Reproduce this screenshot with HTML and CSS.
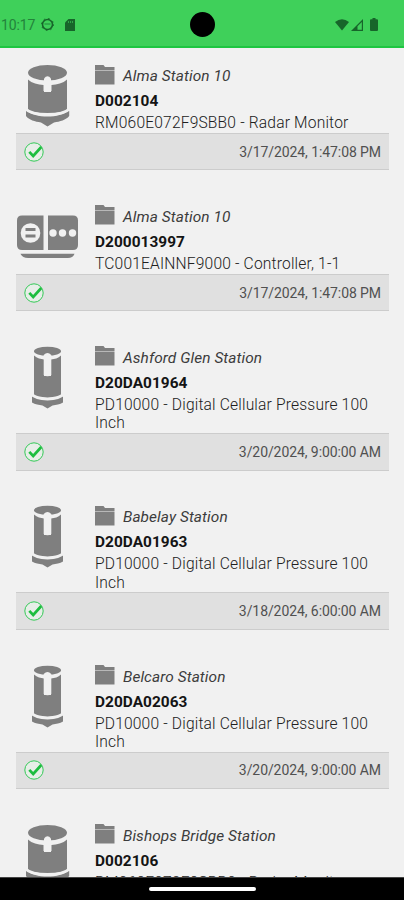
FILE: index.html
```
<!DOCTYPE html>
<html lang="en">
<head>
<meta charset="utf-8">
<title>Stations</title>
<link rel="stylesheet" href="styles.css">
</head>
<body>
<svg class="defs" width="0" height="0" aria-hidden="true">
  <symbol id="radar" viewBox="0 0 64 64">
    <ellipse cx="31.500" cy="8.800" rx="19.500" ry="7.800"/>
    <path d="M12 15.500C16 19.500 22 20.500 27.500 21V27H35.500V21C41 20.500 47 19.500 51 15.500V46C42 50.500 21 50.500 12 46Z"/>
    <path class="cut" d="M28 28V14.500Q31.500 10 35 14.500V28Z"/>
    <path d="M10.500 46.500C19 54.500 44 54.500 52.500 46.500L53.200 47V52C50 56 44 57.500 38 58.500L31.500 62.500L25 58.500C19 57.500 13 56 10 52V47Z"/>
    <path class="gap" d="M9 44.500C17 52.500 46 52.500 54 44.500"/>
  </symbol>
  <symbol id="pressure" viewBox="0 0 64 64">
    <ellipse cx="31.500" cy="5.300" rx="13.500" ry="4.500"/>
    <path d="M18 9.500C21 12.500 25 13 28 13.500V30H35V13.500C39 13 42 12.500 45 9.500V49C39 53 24 53 18 49Z"/>
    <path class="cut" d="M27.700 29V9Q31.500 5 35.300 9V29Q31.500 31.500 27.700 29Z"/>
    <path d="M17 49.500C22 55.500 41 55.500 46 49.500L47 51V56.500C44 58.500 40 59 36.500 59.500L31.500 62.500L26.500 59.500C23 59 19 58.500 16 56.500V51Z"/>
    <path class="gap" d="M15.500 48C21 54.500 42 54.500 47.500 48"/>
  </symbol>
  <symbol id="controller" viewBox="0 0 64 64">
    <path d="M6 10.500H27.500V45H6Q1 45 1 40V15.500Q1 10.500 6 10.500Z"/>
    <path d="M32 10.500H57Q62 10.500 62 15.500V40Q62 45 57 45H32Z"/>
    <path d="M4.500 48.800H58.500Q57 53 52 53H12Q6.500 53 4.500 48.800Z"/>
    <circle class="cut" cx="14.500" cy="28" r="9.800"/>
    <path d="M9.500 23H19.500V26H9.500ZM9.500 29.500H19.500V32.500H9.500Z"/>
    <g class="cut"><circle cx="37" cy="28" r="3.700"/><circle cx="46.500" cy="28" r="3.700"/><circle cx="56.500" cy="28" r="3.700"/></g>
  </symbol>
  <symbol id="folder" viewBox="0 0 20 20">
    <path d="M0 0H8.500L10 2H19.500V5H0Z"/><path d="M0 5H19.500V6H0Z" opacity=".5"/><path d="M0 6H19.500V19.500H0Z"/>
  </symbol>
  <symbol id="check" viewBox="0 0 20 20">
    <circle cx="10" cy="10" r="9.200" fill="#e7eee8" stroke="#35c957" stroke-width="1"/>
    <path d="M5.300 9.800L9.200 14L17.300 5" fill="none" stroke="#1dbd3f" stroke-width="2.700"/>
  </symbol>
</svg>
<div class="screen">
  <header class="status">
    <span class="clock">10:17</span>
    <svg class="face" viewBox="0 0 13 13"><circle cx="6.500" cy="6.500" r="5" fill="none" stroke="currentColor" stroke-width="1.600"/><circle cx="6.500" cy="6.500" r="6" fill="none" stroke="currentColor" stroke-width="1" stroke-dasharray="1.570 3.140"/><path d="M3.500 5.200H9.500V6.800H3.500Z" opacity=".45"/></svg>
    <svg class="card" viewBox="0 0 10 12"><path d="M3.500 0H10V12H0V3.500Z"/><path d="M3.500 2V4M5.500 2V4M7.500 2V4" stroke="#3fd05a" stroke-width=".6"/></svg>
    <span class="camera"></span>
    <svg class="wifi" viewBox="0 0 14 12"><path d="M0 3Q7-2.500 14 3L7 11.500Z"/></svg>
    <svg class="signal" viewBox="0 0 12 12"><path d="M0 12L12 0V12Z"/><path d="M6.500 7.300L10.800 3V10.800H6.500Z" fill="#3fd05a"/></svg>
    <svg class="battery" viewBox="0 0 8 13"><path d="M2.500 0H5.500V1.300H7Q8 1.300 8 2.500V12Q8 13 7 13H1Q0 13 0 12V2.500Q0 1.300 1 1.300H2.500Z"/></svg>
  </header>
  <main class="list">
    <article class="item">
      <div class="info"><svg class="device"><use href="#radar"/></svg>
        <div class="text"><div class="station"><svg class="folder"><use href="#folder"/></svg><span class="name">Alma Station 10</span></div>
        <div class="serial">D002104</div><div class="model">RM060E072F9SBB0 - Radar Monitor</div></div></div>
      <div class="bar"><svg class="check"><use href="#check"/></svg><time>3/17/2024, 1:47:08 PM</time></div>
    </article>
    <article class="item">
      <div class="info"><svg class="device"><use href="#controller"/></svg>
        <div class="text"><div class="station"><svg class="folder"><use href="#folder"/></svg><span class="name">Alma Station 10</span></div>
        <div class="serial">D200013997</div><div class="model">TC001EAINNF9000 - Controller, 1-1</div></div></div>
      <div class="bar"><svg class="check"><use href="#check"/></svg><time>3/17/2024, 1:47:08 PM</time></div>
    </article>
    <article class="item">
      <div class="info"><svg class="device"><use href="#pressure"/></svg>
        <div class="text"><div class="station"><svg class="folder"><use href="#folder"/></svg><span class="name">Ashford Glen Station</span></div>
        <div class="serial">D20DA01964</div><div class="model">PD10000 - Digital Cellular Pressure 100<br>Inch</div></div></div>
      <div class="bar"><svg class="check"><use href="#check"/></svg><time>3/20/2024, 9:00:00 AM</time></div>
    </article>
    <article class="item">
      <div class="info"><svg class="device"><use href="#pressure"/></svg>
        <div class="text"><div class="station"><svg class="folder"><use href="#folder"/></svg><span class="name">Babelay Station</span></div>
        <div class="serial">D20DA01963</div><div class="model">PD10000 - Digital Cellular Pressure 100<br>Inch</div></div></div>
      <div class="bar"><svg class="check"><use href="#check"/></svg><time>3/18/2024, 6:00:00 AM</time></div>
    </article>
    <article class="item">
      <div class="info"><svg class="device"><use href="#pressure"/></svg>
        <div class="text"><div class="station"><svg class="folder"><use href="#folder"/></svg><span class="name">Belcaro Station</span></div>
        <div class="serial">D20DA02063</div><div class="model">PD10000 - Digital Cellular Pressure 100<br>Inch</div></div></div>
      <div class="bar"><svg class="check"><use href="#check"/></svg><time>3/20/2024, 9:00:00 AM</time></div>
    </article>
    <article class="item">
      <div class="info"><svg class="device"><use href="#radar"/></svg>
        <div class="text"><div class="station"><svg class="folder"><use href="#folder"/></svg><span class="name">Bishops Bridge Station</span></div>
        <div class="serial">D002106</div><div class="model">RM060E072F9SBB0 - Radar Monitor</div></div></div>
    </article>
  </main>
  <footer class="nav"><span class="handle"></span></footer>
</div>
</body>
</html>
```
FILE: styles.css
```
* { box-sizing: border-box; }
body { margin: 0; font-family: Roboto, sans-serif; background: #f1f1f1; }
.defs { position: absolute; }
.screen { width: 404px; height: 900px; display: flex; flex-direction: column; overflow: hidden; }
.status { flex: 0 0 48px; display: flex; align-items: center; background: #3fd05a; border-bottom: 2px solid #1ec641; color: #17652a; padding: 3px 26px 0 1px; position: relative; }
.status svg { fill: currentColor; flex: none; }
.clock { font-size: 14px; width: 40px; letter-spacing: -.1px; color: #23833a; }
.face { width: 13px; height: 13px; }
.card { width: 10px; height: 12px; margin-left: 11px; }
.camera { position: absolute; left: 190px; top: 12px; width: 25px; height: 25px; border-radius: 50%; background: #000; }
.wifi { width: 14px; height: 12px; margin-left: auto; }
.signal { width: 12px; height: 12px; margin-left: 2px; }
.battery { width: 8px; height: 13px; margin-left: 7px; }
.list { flex: 1; min-height: 0; overflow: hidden; padding: 15px 15px 0 16px; }
.item { margin-bottom: 33.600px; }
.info { display: flex; gap: 15px; }
.device { width: 64px; height: 64px; margin-top: 1px; fill: #7f7f7f; flex: none; }
.cut { fill: #f1f1f1; }
.gap { fill: none; stroke: #f1f1f1; stroke-width: 3px; }
.text { color: #202020; padding-bottom: .600px; }
.station { display: flex; align-items: center; height: 26px; gap: 8px; }
.folder { width: 20px; height: 20px; fill: #7f7f7f; margin-bottom: 3px; }
.name { font-size: 15.400px; font-style: italic; white-space: nowrap; letter-spacing: .09px; color: #3c3c3c; }
.serial { font-size: 15.400px; font-weight: 700; line-height: 25px; color: #141414; letter-spacing: .05px; }
.model { font-size: 15.600px; line-height: 18.300px; white-space: nowrap; font-weight: 300; letter-spacing: .17px; }
.bar { height: 37.500px; display: flex; align-items: center; justify-content: space-between; background: #e0e0e0; border-top: 1.500px solid #cccccc; border-bottom: 1.500px solid #cccccc; padding: 0 8px; }
.check { width: 20px; height: 20px; }
time { font-size: 14px; color: #505050; letter-spacing: -.08px; }
.nav { flex: 0 0 23px; background: #000; border-top: 1px solid #444; display: flex; justify-content: center; padding-top: 8.500px; }
.handle { width: 107px; height: 4px; border-radius: 2px; background: #fff; }
```
